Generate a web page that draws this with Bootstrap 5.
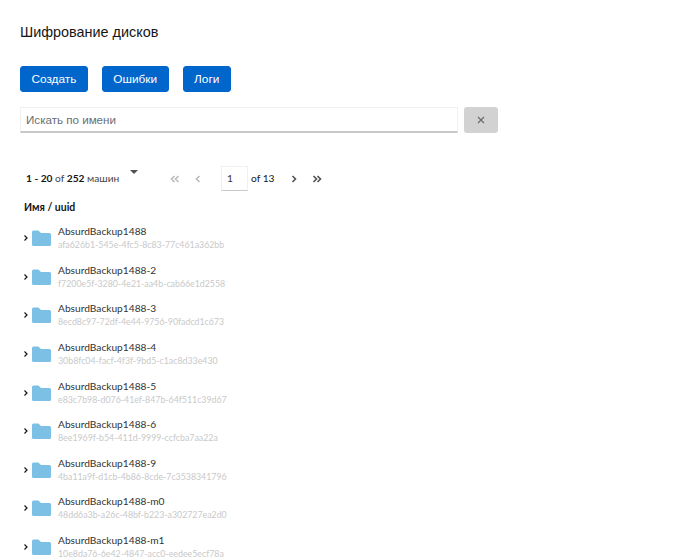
<!DOCTYPE html>
<html lang="ru"><head><meta charset="utf-8"><title>Шифрование дисков</title>
<link rel="stylesheet" href="https://cdn.jsdelivr.net/npm/bootstrap@5.3.0/dist/css/bootstrap.min.css">
<style>
html,body{height:559px;overflow:hidden;background:#fff}
body{font-family:"Liberation Sans",sans-serif;color:#151515;padding:0 20px}
.pg-title{font-size:14.400px;font-weight:400;line-height:20px;margin:0;padding-top:22px;height:66px;color:#151515}
.act-btn{font-size:11.800px;line-height:20px;padding:2px 10.500px;background:#0066cc;border:1px solid #0066cc;border-radius:3px;color:#fff;height:26px}
.btn-row{gap:14px}
.search-row{margin-top:15px;width:478px;gap:6px;height:26px}
.search-in{width:438px;flex:none;height:26px;border:1px solid #f0f0f0;border-bottom:2px solid #c8c8c8;border-radius:0;padding:0 5px;font-size:11.600px;color:#151515;box-shadow:none}
.search-in::placeholder{color:#6a6e73;opacity:1}
.clr-btn{width:35px;height:26px;background:#d2d2d2;border:0;border-radius:3px;color:#6a6e73;padding:0;display:flex;align-items:center;justify-content:center}
.rh{font-family:"Lato",sans-serif}
.pager{margin-top:33px;height:25px;font-size:10.200px;padding-left:6px}
.pg-count{width:91px;white-space:nowrap;color:#444}
.pg-count b{font-weight:700;color:#151515}
.caret-dn{width:0;height:0;border-left:4px solid transparent;border-right:4px solid transparent;border-top:4px solid #4f5255;margin:-14px 0 0 13px}
.pg-ico{display:block;color:#b8bbbe}
.pg-ico.on{color:#4f5255}
.pg-in{width:27px;height:25px;border-bottom:1px solid #c8c8c8;border-top:1px solid #f0f0f0;border-left:1px solid #f0f0f0;border-right:1px solid #f0f0f0;padding:0 0 0 5px;line-height:23px;margin:0 3px 0 0;color:#333;flex:none}
.count-of{width:20px;flex:none;white-space:nowrap}
.col-head{font-size:10.500px;font-weight:700;margin:8px 0 0 4px;line-height:16px;height:16px}
.vm-list{margin:3px 0 0 0;padding:0;list-style:none}
.vm-row{height:38.600px;display:flex;align-items:center;position:relative}
.tw{width:11px;flex:none;margin-left:1px;display:block;margin-top:2px}
.fld{width:19px;height:16px;flex:none;margin:2px 7px 0 0;display:block}
.vm-name{font-size:10.200px;line-height:14px;color:#333;white-space:nowrap;margin-top:1px}
.vm-id{font-size:8.800px;line-height:12px;color:#c9c9c9;margin-top:1px;white-space:nowrap}
</style></head><body>
<h1 class="pg-title">Шифрование дисков</h1>
<div class="d-flex btn-row">
<button class="btn act-btn" type="button">Создать</button>
<button class="btn act-btn" type="button">Ошибки</button>
<button class="btn act-btn" type="button">Логи</button>
</div>
<div class="d-flex search-row">
<input class="form-control search-in" type="text" placeholder="Искать по имени">
<button class="btn clr-btn" type="button" aria-label="Очистить"><svg width="8" height="8" viewBox="0 0 8 8"><path d="M1 1l6 6M7 1L1 7" stroke="currentColor" stroke-width="1.300" fill="none"/></svg></button>
</div>
<div class="d-flex align-items-center pager rh">
<div class="pg-count"><b>1 - 20</b> of <b>252</b> машин</div>
<div class="caret-dn"></div>
<svg class="pg-ico" style="margin-left:32px" width="10" height="8" viewBox="0 0 10 8"><path d="M4.500 1L1.500 4l3 3M8.500 1l-3 3 3 3" stroke="currentColor" stroke-width="1.600" fill="none"/></svg>
<svg class="pg-ico" style="margin-left:15px" width="6" height="8" viewBox="0 0 6 8"><path d="M4.500 1l-3 3 3 3" stroke="currentColor" stroke-width="1.600" fill="none"/></svg>
<div class="pg-in" style="margin-left:20px">1</div>
<div class="count-of">of 13</div>
<svg class="pg-ico on" style="margin-left:20px" width="6" height="8" viewBox="0 0 6 8"><path d="M1.500 1l3 3-3 3" stroke="currentColor" stroke-width="1.600" fill="none"/></svg>
<svg class="pg-ico on" style="margin-left:15px" width="10" height="8" viewBox="0 0 10 8"><path d="M1.500 1l3 3-3 3M5.500 1l3 3-3 3" stroke="currentColor" stroke-width="1.600" fill="none"/></svg>
</div>
<div class="col-head rh">Имя / uuid</div>
<ul class="vm-list rh" id="vl"></ul>
<script>
var d=[["AbsurdBackup1488","afa626b1-545e-4fc5-8c83-77c461a362bb"],["AbsurdBackup1488-2","f7200e5f-3280-4e21-aa4b-cab66e1d2558"],["AbsurdBackup1488-3","8ecd8c97-72df-4e44-9756-90fadcd1c673"],["AbsurdBackup1488-4","30b8fc04-facf-4f3f-9bd5-c1ac8d33e430"],["AbsurdBackup1488-5","e83c7b98-d076-41ef-847b-64f511c39d67"],["AbsurdBackup1488-6","8ee1969f-b54-411d-9999-ccfcba7aa22a"],["AbsurdBackup1488-9","4ba11a9f-d1cb-4b86-8cde-7c3538341796"],["AbsurdBackup1488-m0","48dd6a3b-a26c-48bf-b223-a302727ea2d0"],["AbsurdBackup1488-m1","10e8da76-6e42-4847-acc0-eedee5ecf78a"]];
document.getElementById('vl').innerHTML=d.map(function(r){return '<li class="vm-row"><svg class="tw" width="11" height="8" viewBox="0 0 11 8"><path d="M3.500 1.500l2.500 2.500-2.500 2.500" stroke="#151515" stroke-width="1.200" fill="none"/></svg><svg class="fld" viewBox="0 0 19 16"><path d="M0 2a1.500 1.500 0 0 1 1.500-1.500h5L9 3h8.500A1.500 1.500 0 0 1 19 4.500V14.500A1.500 1.500 0 0 1 17.500 16h-16A1.500 1.500 0 0 1 0 14.500z" fill="#7cc0e6"/></svg><div><div class="vm-name">'+r[0]+'</div><div class="vm-id">'+r[1]+'</div></div></li>'}).join('');
</script>
<script src="https://cdn.jsdelivr.net/npm/bootstrap@5.3.0/dist/js/bootstrap.bundle.min.js"></script>
</body></html>
